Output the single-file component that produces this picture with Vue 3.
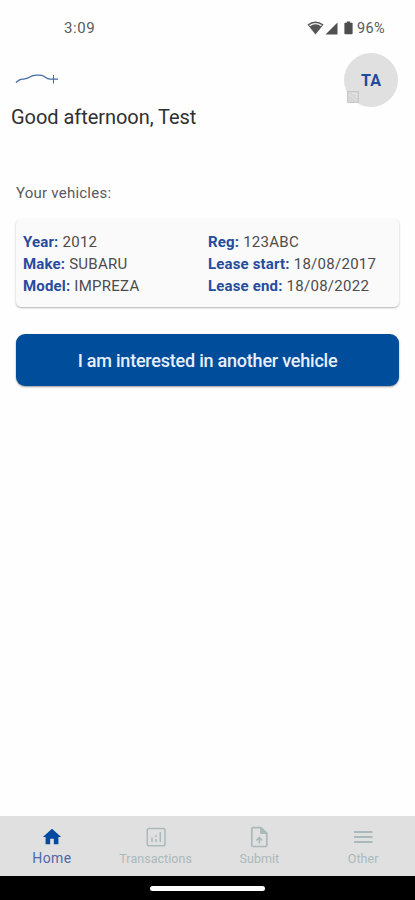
<script setup>
const columns = [
  [
    { label: 'Year:', value: '2012' },
    { label: 'Make:', value: 'SUBARU' },
    { label: 'Model:', value: 'IMPREZA' },
  ],
  [
    { label: 'Reg:', value: '123ABC' },
    { label: 'Lease start:', value: '18/08/2017' },
    { label: 'Lease end:', value: '18/08/2022' },
  ],
]
</script>

<template>
  <div class="screen">
    <header class="status">
      <span class="time">3:09</span>
      <div class="indicators">
        <svg class="wifi" width="17" height="14" viewBox="0 0 17 14">
          <path d="M.5 3.4Q8.500-2.400 16.500 3.400L8.500 13.500Z" fill="#555" />
          <path d="M2.600 4.600Q8.500.8 14.400 4.600" fill="none" stroke="#f4f4f4" stroke-width="1.300" />
        </svg>
        <svg class="signal" width="13" height="13" viewBox="0 0 13 13"><path d="M12.500.500V12.500H.500Z" fill="#505050" /></svg>
        <svg class="battery" width="9" height="14" viewBox="0 0 9 14"><path d="M2.800.500h3.400v1.300H8q.6 0 .6.700v10q0 .8-.8.800H1.200q-.8 0-.8-.8v-10q0-.7.600-.7h1.800z" fill="#4d4d4d" /></svg>
        <span class="percent">96%</span>
      </div>
    </header>

    <section class="top">
      <svg class="logo" width="44" height="14" viewBox="0 0 44 14" fill="none" stroke="#426aa6">
        <path d="M1 10.500C3 8.500 4.500 7.500 7 7.200S12 7 14 5.600S18 3.500 21 3.200S27 3 29 4.300S32 7 35 7.200H43" stroke-width="1.200" />
        <path d="M38.500 3V11.500" stroke-width="1" />
      </svg>
      <div class="avatar">
        TA
        <svg class="badge" width="12" height="12" viewBox="0 0 12 12">
          <rect x=".5" y=".5" width="11" height="11" fill="#d6d6d6" stroke="#c8c8c8" />
          <path d="M2.500 3.500l7 6M5 2.500h4.500V7" fill="none" stroke="#e6e6e6" />
        </svg>
      </div>
    </section>
    <h1 class="greeting">Good afternoon, Test</h1>

    <main>
      <h2 class="heading">Your vehicles:</h2>
      <article class="card">
        <div v-for="(rows, i) in columns" :key="i">
          <p v-for="row in rows" :key="row.label"><b>{{ row.label }}</b> {{ row.value }}</p>
        </div>
      </article>
      <button class="cta"><span>I am interested in another vehicle</span></button>
    </main>

    <nav class="tabs">
      <a class="tab active">
        <svg width="22" height="22" viewBox="0 0 24 24"><path d="M10 20v-6h4v6h5v-8h3L12 3 2 12h3v8z" fill="#0649a0" /></svg>
        <span class="home">Home</span>
      </a>
      <a class="tab">
        <svg width="24" height="24" viewBox="0 0 24 24" fill="none" stroke="currentColor" stroke-width="1.500">
          <rect x="3.300" y="3.500" width="17.700" height="17.300" rx="1.800" />
          <path d="M8 12.500v4.500M12 10v2M12 14v3M16.300 7v10" />
        </svg>
        <span class="transactions">Transactions</span>
      </a>
      <a class="tab">
        <svg width="24" height="24" viewBox="0 0 24 24" fill="none" stroke="currentColor" stroke-width="1.700">
          <path d="M14 2.700H6Q4.800 2.700 4.800 4.200V20Q4.800 21.500 6 21.500H18Q19.800 21.500 19.800 20V8.200Z" />
          <path d="M13.700 3v5.500h5.600z" fill="currentColor" stroke-width="1" />
          <path d="M12.300 18.500v-6M9.300 15.500l3-3 3 3" />
        </svg>
        <span class="submit">Submit</span>
      </a>
      <a class="tab">
        <svg width="24" height="24" viewBox="0 0 24 24" stroke="currentColor" stroke-width="1.900"><path d="M3 7h18.500M3 12h18.500M3 17h18.500" /></svg>
        <span class="other">Other</span>
      </a>
    </nav>
    <footer class="gesture"><i></i></footer>
  </div>
</template>

<style>
body { margin: 0; background: #fff; }
</style>

<style scoped>
.screen { width: 415px; height: 900px; display: flex; flex-direction: column; background: #fefefe; font-family: Roboto, sans-serif; color: #444; overflow: hidden; }
h1, h2, p { margin: 0; font-weight: 400; }
svg { display: block; flex: none; }
.status { height: 53px; box-sizing: border-box; padding: 18px 30px 0 64px; display: flex; justify-content: space-between; align-items: flex-start; font-size: 15px; line-height: 20px; color: #5a5a5a; }
.time { letter-spacing: .6px; }
.indicators { display: flex; align-items: center; height: 20px; }
.signal { margin-left: 1px; }
.battery { margin-left: 6px; }
.percent { margin-left: 4px; font-size: 14.500px; letter-spacing: .35px; padding-top: 1px; }
.top { display: flex; justify-content: space-between; padding: 0 17px 0 15px; height: 54px; }
.logo { margin-top: 19px; }
.avatar { position: relative; width: 54px; height: 54px; border-radius: 50%; background: #e0e0e0; color: #204b9b; font-size: 16px; font-weight: 700; display: flex; align-items: center; justify-content: center; }
.badge { position: absolute; left: 3px; bottom: 4px; }
.greeting { padding-left: 11px; font-size: 20px; line-height: 24px; margin-top: -2px; color: #303030; letter-spacing: -.05px; white-space: nowrap; }
main { flex: 1; padding: 54px 16px 0; }
.heading { font-size: 15px; line-height: 20px; color: #5a5a5a; letter-spacing: .23px; }
.card { display: grid; grid-template-columns: 185px 1fr; height: 88px; margin-top: 16px; box-sizing: border-box; padding: 12px 7px 0; border-radius: 5px; background: #fafafa; box-shadow: 0 1px 2px rgba(0, 0, 0, .3); font-size: 15px; line-height: 22px; white-space: nowrap; color: #4c4c4c; letter-spacing: .28px; }
.card b { color: #264c9e; font-weight: 700; letter-spacing: .16px; }
.cta { display: flex; align-items: center; justify-content: center; width: 383px; height: 52px; margin-top: 27px; padding: 0; border: 0; border-radius: 9px; background: #004d9b; box-shadow: 0 1px 2px rgba(0, 0, 0, .4); color: #e8effc; font: 500 18px Roboto, sans-serif; letter-spacing: -.22px; white-space: nowrap; }
.tabs { display: grid; grid-template-columns: repeat(4, 1fr); height: 60px; background: #e0e0e0; color: #aab9bc; }
.tab { display: flex; flex-direction: column; align-items: center; padding-top: 9px; box-sizing: border-box; font-size: 12.500px; }
.tab svg { height: 24px; }
.tab span { line-height: 16px; margin-top: 2px; letter-spacing: .04px; }
.tab.active { color: #5068a8; }
.tab .home { font-size: 14px; margin-top: 1px; letter-spacing: .35px; }
.gesture { height: 24px; background: #000; display: flex; justify-content: center; align-items: center; }
.gesture i { width: 115px; height: 5px; border-radius: 3px; background: #fff; }
</style>
